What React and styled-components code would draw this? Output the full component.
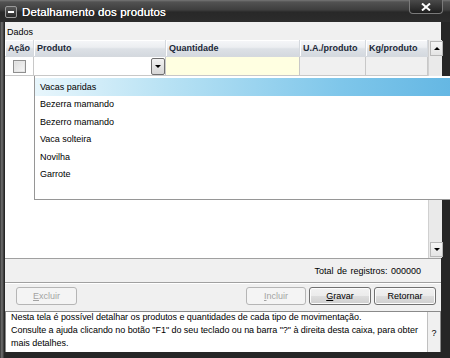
import styled, { createGlobalStyle } from 'styled-components';

const Global = createGlobalStyle`
  html, body { margin: 0; padding: 0; background: #2a2a2a; }
  body { font-family: "Liberation Sans", Arial, sans-serif; }
`

const Window = styled.div`
  position: relative;
  width: 450px;
  height: 358px;
  overflow: hidden;
  display: flex;
  flex-direction: column;
  background: linear-gradient(90deg, #1c1c1c 0, #6a6a6a 1px, #5a5a5a 3px, #262626 4px, #262626 100%);
`

const TitleBar = styled.div`
  height: 22px;
  flex: none;
  display: flex;
  align-items: center;
  gap: 5px;
  padding-left: 5px;
  background: linear-gradient(#767676 0, #525252 2px, #3e3e3e 45%, #282828 55%, #2c2c2c 100%);
`

const MinBox = styled.div`
  width: 10px;
  height: 10px;
  margin-top: 2px;
  border: 1px solid #9a9a9a;
  border-radius: 2px;
  background: linear-gradient(#5a5a5a, #2a2a2a);
  display: flex;
  align-items: center;
  justify-content: center;
  &::after { content: ''; width: 6px; height: 2px; background: #fff; }
`

const Title = styled.span`
  color: #fff;
  font-size: 11.5px;
  margin-top: 2px;
  letter-spacing: 0.1px;
  text-shadow: 0 0 0.4px #fff;
`

const CloseBtn = styled.div`
  position: absolute;
  top: 0;
  right: 7px;
  width: 32px;
  height: 13px;
  border: 1px solid #7a7a7a;
  border-top: none;
  border-radius: 0 0 4px 4px;
  background: linear-gradient(#4a4a4a, #1e1e1e);
  display: flex;
  align-items: center;
  justify-content: center;
`

const Body = styled.div`
  flex: 1;
  margin: 0 9px 6px 5px;
  background: #f0f0f0;
  display: flex;
  flex-direction: column;
  font-size: 9px;
  color: #000;
`

const Label = styled.div`
  height: 17px;
  flex: none;
  display: flex;
  align-items: center;
  padding-left: 2px;
  padding-top: 1px;
  font-size: 9px;
`

const Grid = styled.div`
  position: relative;
  height: 218px;
  flex: none;
  display: flex;
  border-bottom: 1px solid #a0a0a0;
  background: #fff;
`

const Columns = styled.div`
  flex: 1;
  display: flex;
  flex-direction: column;
`

const Row = styled.div`
  display: grid;
  grid-template-columns: 29px 132px 134px 66px 62px;
  height: ${p => p.$h}px;
`

const HeadCell = styled.div`
  display: flex;
  align-items: center;
  padding-left: 3px;
  font-weight: bold;
  color: #1c2838;
  border-right: 1px solid #d5d9de;
  border-bottom: 1px solid #d5d9de;
  background: linear-gradient(#f6f7f9 0, #eceef1 45%, #dde1e6 55%, #d4d9df 100%);
  box-shadow: inset 1px 1px 0 #fff;
`

const Cell = styled.div`
  position: relative;
  display: flex;
  align-items: center;
  justify-content: ${p => p.$center ? 'center' : 'flex-start'};
  background: ${p => p.$bg};
  border-right: 1px solid #c8c8c8;
  border-bottom: 1px solid #c8c8c8;
`

const Check = styled.div`
  width: 11px;
  height: 11px;
  border: 1px solid #8f8f8f;
  background: linear-gradient(135deg, #dcdcdc, #f8f8f8);
  box-shadow: inset 0 0 0 1px #e6e6e6;
`

const DropBtn = styled.div`
  position: absolute;
  right: 0;
  top: 1px;
  width: 12px;
  height: 15px;
  border: 1px solid #707070;
  border-radius: 2px;
  background: linear-gradient(#f2f2f2, #d6d6d6);
  display: flex;
  align-items: center;
  justify-content: center;
`

const Arrow = styled.div`
  width: 0;
  height: 0;
  border-left: 3px solid transparent;
  border-right: 3px solid transparent;
  ${p => p.$up ? 'border-bottom: 3px solid #000;' : 'border-top: 3px solid #000;'}
`

const GridFill = styled.div`
  flex: 1;
  background: #fff;
`

const Scroll = styled.div`
  width: 13px;
  flex: none;
  display: flex;
  flex-direction: column;
  justify-content: space-between;
  background: #eaeaea;
  border-left: 1px solid #d0d0d0;
  padding: 1px 0 1px 0;
`

const ScrollBtn = styled.div`
  width: 11px;
  height: 13px;
  margin-left: 1px;
  border: 1px solid #b8b8b8;
  background: linear-gradient(#f6f6f6, #e4e4e4);
  display: flex;
  align-items: center;
  justify-content: center;
`

const List = styled.div`
  position: absolute;
  left: 29px;
  top: 36px;
  width: 440px;
  height: 124px;
  padding-top: 2px;
  background: #fff;
  border-left: 1px solid #969696;
  border-bottom: 1px solid #969696;
  box-sizing: border-box;
  display: flex;
  flex-direction: column;
`

const Item = styled.div`
  height: 17.5px;
  flex: none;
  display: flex;
  align-items: center;
  padding-left: 5px;
  background: ${p => p.$active ? 'linear-gradient(90deg, #e8f6fc 0, #b8e2f4 30%, #7ec6ea 70%, #5fb4e2 100%)' : 'transparent'};
`

const Footer = styled.div`
  height: 23px;
  flex: none;
  display: flex;
  align-items: center;
  justify-content: flex-end;
  padding-right: 20px;
  border-bottom: 1px solid #a0a0a0;
  box-shadow: 0 1px 0 #fff;
  word-spacing: 1px;
`

const Buttons = styled.div`
  height: 28px;
  flex: none;
  display: flex;
  align-items: flex-start;
  padding: 4px 5px 0 11px;
  gap: 3px;
  box-sizing: border-box;
`

const Btn = styled.div`
  width: ${p => p.$w}px;
  height: 18px;
  box-sizing: border-box;
  display: flex;
  align-items: center;
  justify-content: center;
  border-radius: 3px;
  border: 1px solid ${p => p.$off ? '#b5b5b5' : '#707070'};
  background: ${p => p.$off ? '#f4f4f4' : 'linear-gradient(#f2f2f2 0, #ebebeb 50%, #dddddd 51%, #cfcfcf 100%)'};
  color: ${p => p.$off ? '#a3a3a3' : '#000'};
  box-shadow: inset 0 0 0 1px ${p => p.$off ? '#f4f4f4' : '#fcfcfc'};
  u { text-decoration: underline; }
`

const Spacer = styled.div`
  flex: 1;
`

const Help = styled.div`
  flex: 1;
  display: flex;
  background: #fff;
  border: 1px solid #8a8a8a;
  border-bottom: none;
`

const HelpText = styled.div`
  flex: 1;
  padding: 0 2px 0 5px;
  margin-top: -1px;
  line-height: 13px;
  letter-spacing: -0.05px;
`

const HelpQ = styled.div`
  width: 12px;
  flex: none;
  display: flex;
  align-items: center;
  justify-content: center;
  padding-top: 1px;
  background: #f0f0f0;
  border-left: 1px solid #c0c0c0;
`

const products = ['Vacas paridas', 'Bezerra mamando', 'Bezerro mamando', 'Vaca solteira', 'Novilha', 'Garrote']

export default function App() {
  return (
    <Window>
      <Global />
      <TitleBar>
        <MinBox />
        <Title>Detalhamento dos produtos</Title>
      </TitleBar>
      <CloseBtn>
        <svg width="10" height="8" viewBox="0 0 10 8">
          <path d="M1 0.5 L9 7.5 M9 0.5 L1 7.5" stroke="#fff" strokeWidth="2" />
        </svg>
      </CloseBtn>
      <Body>
        <Label>Dados</Label>
        <Grid>
          <Columns>
            <Row $h={17}>
              <HeadCell>Ação</HeadCell>
              <HeadCell>Produto</HeadCell>
              <HeadCell>Quantidade</HeadCell>
              <HeadCell>U.A./produto</HeadCell>
              <HeadCell>Kg/produto</HeadCell>
            </Row>
            <Row $h={19}>
              <Cell $bg="#fff" $center><Check /></Cell>
              <Cell $bg="#fff"><DropBtn><Arrow /></DropBtn></Cell>
              <Cell $bg="#ffffe1" />
              <Cell $bg="#f0f0f0" />
              <Cell $bg="#f0f0f0" />
            </Row>
            <GridFill />
          </Columns>
          <Scroll>
            <ScrollBtn><Arrow $up /></ScrollBtn>
            <ScrollBtn><Arrow /></ScrollBtn>
          </Scroll>
          <List>
            {products.map((p, i) => <Item key={p} $active={i === 0}>{p}</Item>)}
          </List>
        </Grid>
        <Footer>Total de registros: 000000</Footer>
        <Buttons>
          <Btn $w={61} $off><u>E</u>xcluir</Btn>
          <Spacer />
          <Btn $w={60} $off><u>I</u>ncluir</Btn>
          <Btn $w={62}><u>G</u>ravar</Btn>
          <Btn $w={62}>Retornar</Btn>
        </Buttons>
        <Help>
          <HelpText>
            Nesta tela é possível detalhar os produtos e quantidades de cada tipo de movimentação.<br />
            Consulte a ajuda clicando no botão "F1" do seu teclado ou na barra "?" à direita desta caixa, para obter mais detalhes.
          </HelpText>
          <HelpQ>?</HelpQ>
        </Help>
      </Body>
    </Window>
  )
}
